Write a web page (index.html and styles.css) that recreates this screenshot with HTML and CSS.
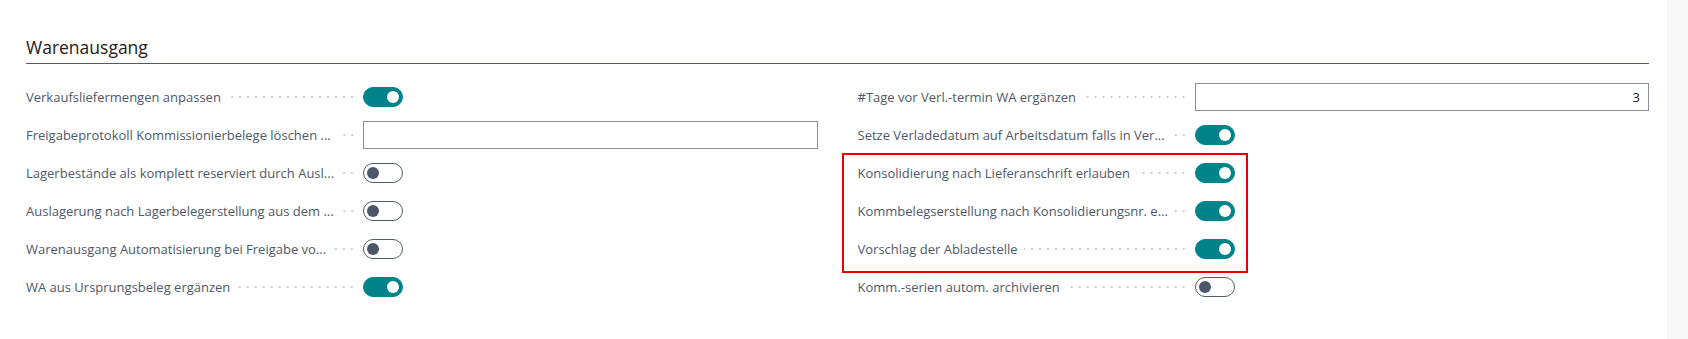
FILE: index.html
```html
<!DOCTYPE html>
<html lang="de">
<head>
  <meta charset="UTF-8">
  <meta name="viewport" content="width=device-width, initial-scale=1.0">
  <title>Warenausgang</title>
  <link rel="stylesheet" href="styles.css">
</head>
<body>
  <div class="page">
    <main class="content">
      <section class="group">
        <h2 class="group-title">Warenausgang</h2>

        <div class="columns">
          <div class="column">
            <div class="field">
              <div class="label"><span class="label-text">Verkaufsliefermengen anpassen</span><span class="leader"></span></div>
              <span class="toggle on"></span>
            </div>
            <div class="field">
              <div class="label"><span class="label-text">Freigabeprotokoll Kommissionierbelege löschen ...</span><span class="leader"></span></div>
              <input class="text-input" type="text" value="">
            </div>
            <div class="field">
              <div class="label"><span class="label-text">Lagerbestände als komplett reserviert durch Ausl...</span><span class="leader"></span></div>
              <span class="toggle"></span>
            </div>
            <div class="field">
              <div class="label"><span class="label-text">Auslagerung nach Lagerbelegerstellung aus dem ...</span><span class="leader"></span></div>
              <span class="toggle"></span>
            </div>
            <div class="field">
              <div class="label"><span class="label-text">Warenausgang Automatisierung bei Freigabe vo...</span><span class="leader"></span></div>
              <span class="toggle"></span>
            </div>
            <div class="field">
              <div class="label"><span class="label-text">WA aus Ursprungsbeleg ergänzen</span><span class="leader"></span></div>
              <span class="toggle on"></span>
            </div>
          </div>

          <div class="column">
            <div class="field">
              <div class="label"><span class="label-text">#Tage vor Verl.-termin WA ergänzen</span><span class="leader"></span></div>
              <input class="text-input number" type="text" value="3">
            </div>
            <div class="field">
              <div class="label"><span class="label-text">Setze Verladedatum auf Arbeitsdatum falls in Ver...</span><span class="leader"></span></div>
              <span class="toggle on"></span>
            </div>
            <div class="highlight">
              <div class="field">
                <div class="label"><span class="label-text">Konsolidierung nach Lieferanschrift erlauben</span><span class="leader"></span></div>
                <span class="toggle on"></span>
              </div>
              <div class="field">
                <div class="label"><span class="label-text">Kommbelegserstellung nach Konsolidierungsnr. e...</span><span class="leader"></span></div>
                <span class="toggle on"></span>
              </div>
              <div class="field">
                <div class="label"><span class="label-text">Vorschlag der Abladestelle</span><span class="leader"></span></div>
                <span class="toggle on"></span>
              </div>
            </div>
            <div class="field">
              <div class="label"><span class="label-text">Komm.-serien autom. archivieren</span><span class="leader"></span></div>
              <span class="toggle"></span>
            </div>
          </div>
        </div>
      </section>
    </main>
    <div class="scroll-track"></div>
  </div>
</body>
</html>
```

FILE: styles.css
```css
* {
  margin: 0;
  padding: 0;
  box-sizing: border-box;
}

body {
  font-family: "Open Sans", "Noto Sans", sans-serif;
  background-color: #fff;
  color: #4f5868;
  height: 339px;
  overflow: hidden;
}

.page {
  display: flex;
  height: 100%;
}

.content {
  flex: 1;
  padding: 35px 18px 0 26px;
}

.scroll-track {
  width: 21px;
  background-color: #f8f8f8;
}

.group-title {
  font-size: 17.5px;
  font-weight: 400;
  line-height: 24px;
  color: #212121;
  padding-bottom: 4px;
  border-bottom: 1px solid #505c6d;
}

.columns {
  display: grid;
  grid-template-columns: 1fr 1fr;
  column-gap: 40px;
  margin-top: 14px;
}

.field {
  display: flex;
  align-items: center;
  height: 38px;
}

.label {
  width: 337px;
  flex-shrink: 0;
  display: flex;
  align-items: center;
  padding-right: 7px;
  font-size: 13px;
}

.label-text {
  white-space: nowrap;
  overflow: hidden;
  text-overflow: ellipsis;
  min-width: 0;
}

.leader {
  flex: 1;
  min-width: 6px;
  height: 2px;
  margin-left: 6px;
  background-image: radial-gradient(circle, #d2d2d2 0.9px, transparent 1.1px);
  background-size: 8px 2px;
  background-position: right center;
  background-repeat: repeat-x;
}

.text-input {
  flex: 1;
  height: 28px;
  border: 1px solid #8a909b;
  border-radius: 0;
  padding: 0 8px;
  font-family: inherit;
  font-size: 13px;
  color: #212121;
  background: #fff;
  outline: none;
}

.text-input.number {
  text-align: right;
}

.toggle {
  position: relative;
  width: 40px;
  height: 20px;
  border-radius: 10px;
  border: 1px solid #505c6d;
  background-color: #fff;
  flex-shrink: 0;
}

.toggle::after {
  content: "";
  position: absolute;
  top: 3px;
  left: 3px;
  width: 12px;
  height: 12px;
  border-radius: 50%;
  background-color: #4e566a;
}

.toggle.on {
  background-color: #008489;
  border-color: #008489;
}

.toggle.on::after {
  left: auto;
  right: 3px;
  background-color: #fff;
}

.highlight {
  position: relative;
}

.highlight::after {
  content: "";
  position: absolute;
  left: -16px;
  top: -1px;
  width: 402px;
  height: 116px;
  border: 2px solid #e60000;
  pointer-events: none;
}
```
